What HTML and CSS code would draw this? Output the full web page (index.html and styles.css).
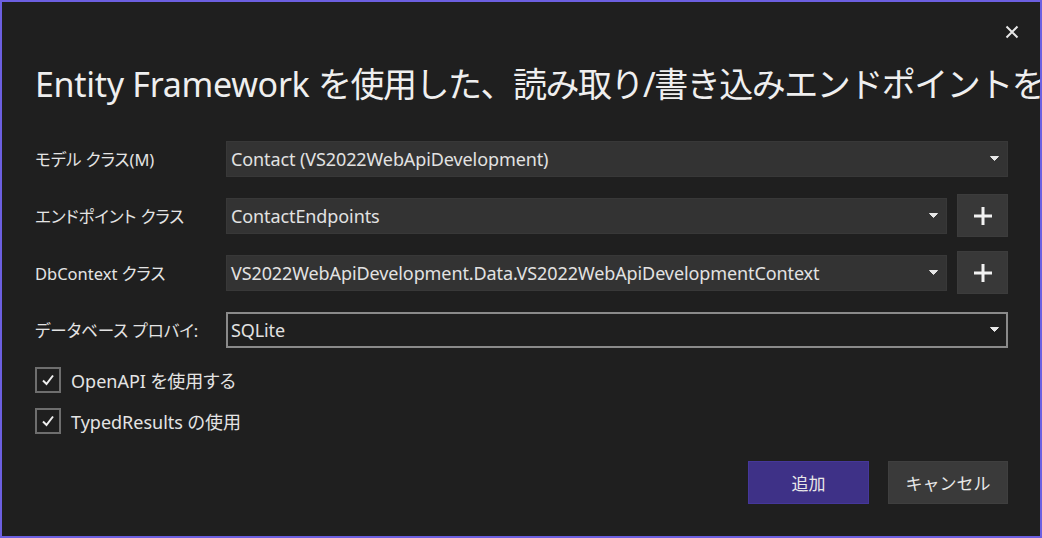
FILE: index.html
```html
<!DOCTYPE html>
<html lang="ja">
<head>
    <meta charset="UTF-8">
    <meta name="viewport" content="width=device-width, initial-scale=1.0">
    <title>Entity Framework を使用した、読み取り/書き込みエンドポイント</title>
    <link rel="stylesheet" href="styles.css">
</head>
<body>
    <div class="dialog">
        <div class="top-bar">
            <button class="close-button" aria-label="閉じる">
                <svg width="14" height="14" viewBox="0 0 14 14">
                    <path d="M1.5 1.5 L12.5 12.5 M12.5 1.5 L1.5 12.5" stroke="#e6e6e6" stroke-width="2" fill="none"/>
                </svg>
            </button>
        </div>

        <h1 class="title">Entity Framework <span class="title-ja">を使用した、読み取り/書き込みエンドポイントを追加する</span></h1>

        <div class="form">
            <div class="form-row">
                <label class="form-label">モデル クラス(M)</label>
                <div class="combo">
                    <span>Contact (VS2022WebApiDevelopment)</span>
                    <svg class="arrow" width="9" height="5" viewBox="0 0 9 5"><path d="M0.5 0.5 H8.5 L4.5 4.5 Z" fill="#e6e6e6" stroke="#e6e6e6" stroke-linejoin="round"/></svg>
                </div>
            </div>

            <div class="form-row">
                <label class="form-label">エンドポイント クラス</label>
                <div class="combo">
                    <span>ContactEndpoints</span>
                    <svg class="arrow" width="9" height="5" viewBox="0 0 9 5"><path d="M0.5 0.5 H8.5 L4.5 4.5 Z" fill="#e6e6e6" stroke="#e6e6e6" stroke-linejoin="round"/></svg>
                </div>
                <button class="add-button" aria-label="追加">
                    <svg width="18" height="18" viewBox="0 0 18 18"><path d="M9 0 V18 M0 9 H18" stroke="#f2f2f2" stroke-width="3" fill="none"/></svg>
                </button>
            </div>

            <div class="form-row">
                <label class="form-label">DbContext クラス</label>
                <div class="combo">
                    <span>VS2022WebApiDevelopment.Data.VS2022WebApiDevelopmentContext</span>
                    <svg class="arrow" width="9" height="5" viewBox="0 0 9 5"><path d="M0.5 0.5 H8.5 L4.5 4.5 Z" fill="#e6e6e6" stroke="#e6e6e6" stroke-linejoin="round"/></svg>
                </div>
                <button class="add-button" aria-label="追加">
                    <svg width="18" height="18" viewBox="0 0 18 18"><path d="M9 0 V18 M0 9 H18" stroke="#f2f2f2" stroke-width="3" fill="none"/></svg>
                </button>
            </div>

            <div class="form-row">
                <label class="form-label">データベース プロバイ:</label>
                <div class="combo focused">
                    <span>SQLite</span>
                    <svg class="arrow" width="9" height="5" viewBox="0 0 9 5"><path d="M0.5 0.5 H8.5 L4.5 4.5 Z" fill="#e6e6e6" stroke="#e6e6e6" stroke-linejoin="round"/></svg>
                </div>
            </div>
        </div>

        <div class="options">
            <label class="check">
                <span class="check-box">
                    <svg width="16" height="16" viewBox="0 0 16 16"><path d="M3 8.5 L6.5 12 L13 3.5" stroke="#f0f0f0" stroke-width="2" fill="none"/></svg>
                </span>
                OpenAPI を使用する
            </label>
            <label class="check">
                <span class="check-box">
                    <svg width="16" height="16" viewBox="0 0 16 16"><path d="M3 8.5 L6.5 12 L13 3.5" stroke="#f0f0f0" stroke-width="2" fill="none"/></svg>
                </span>
                TypedResults の使用
            </label>
        </div>

        <div class="actions">
            <button class="button primary">追加</button>
            <button class="button">キャンセル</button>
        </div>
    </div>
</body>
</html>
```

FILE: styles.css
```css
/* ダイアログ全体 */
* {
    box-sizing: border-box;
}

body {
    margin: 0;
    padding: 0;
    background-color: #1f1f1f;
    color: #e4e4e4;
    font-family: "Noto Sans", "Noto Sans CJK JP", sans-serif;
    font-feature-settings: "palt";
    overflow: hidden;
}

.dialog {
    width: 1042px;
    height: 538px;
    border: 2px solid #6c5fe0;
    background-color: #1f1f1f;
    padding: 0 32px 32px 33px;
    display: flex;
    flex-direction: column;
    overflow: hidden;
}

.top-bar {
    display: flex;
    justify-content: flex-end;
    height: 58px;
    padding-top: 20px;
    margin-right: -14px;
}

.close-button {
    background: none;
    border: none;
    padding: 3px;
    width: 20px;
    height: 20px;
    display: flex;
    cursor: pointer;
}

/* タイトルはダイアログ幅を超えると右端で切れる */
.title {
    margin: 0;
    font-size: 34px;
    font-weight: 400;
    line-height: 48px;
    color: #efefef;
    white-space: nowrap;
    margin-right: -300px;
    font-feature-settings: normal;
    letter-spacing: -0.3px;
}

.title-ja {
    letter-spacing: -1.5px;
}

/* 入力欄 */
.form {
    display: flex;
    flex-direction: column;
    gap: 14px;
    margin-top: 29px;
}

.form-row {
    display: flex;
    align-items: center;
    height: 43px;
    gap: 10px;
}

.form-label {
    width: 181px;
    flex-shrink: 0;
    font-size: 16.5px;
}

.combo {
    flex: 1;
    height: 36px;
    background-color: #333333;
    border: 1px solid #383838;
    display: flex;
    align-items: center;
    justify-content: space-between;
    padding: 0 8px 0 4px;
    font-size: 18px;
    color: #e2e2e2;
    letter-spacing: -0.1px;
}

.combo.focused {
    background-color: #1f1f1f;
    border: 2px solid #8a8a8a;
    padding-left: 3px;
    padding-right: 7px;
}

.arrow {
    flex-shrink: 0;
}

.add-button {
    width: 51px;
    height: 43px;
    background-color: #383838;
    border: 1px solid #3c3c3c;
    display: flex;
    align-items: center;
    justify-content: center;
    cursor: pointer;
}

/* チェックボックス */
.options {
    display: flex;
    flex-direction: column;
    gap: 15px;
    margin-top: 16px;
}

.check {
    display: flex;
    align-items: center;
    gap: 10px;
    font-size: 18px;
}

.check-box {
    width: 26px;
    height: 26px;
    border: 2px solid #6e6e6e;
    display: flex;
    align-items: center;
    justify-content: center;
}

/* ボタン */
.actions {
    margin-top: auto;
    display: flex;
    justify-content: flex-end;
    gap: 19px;
}

.button {
    width: 120px;
    height: 43px;
    background-color: #3a3a3a;
    border: 1px solid #3f3f3f;
    color: #e8e8e8;
    font-family: inherit;
    font-size: 17px;
    cursor: pointer;
}

.button.primary {
    width: 121px;
    background-color: #3e3187;
    border-color: #45379a;
}
```
